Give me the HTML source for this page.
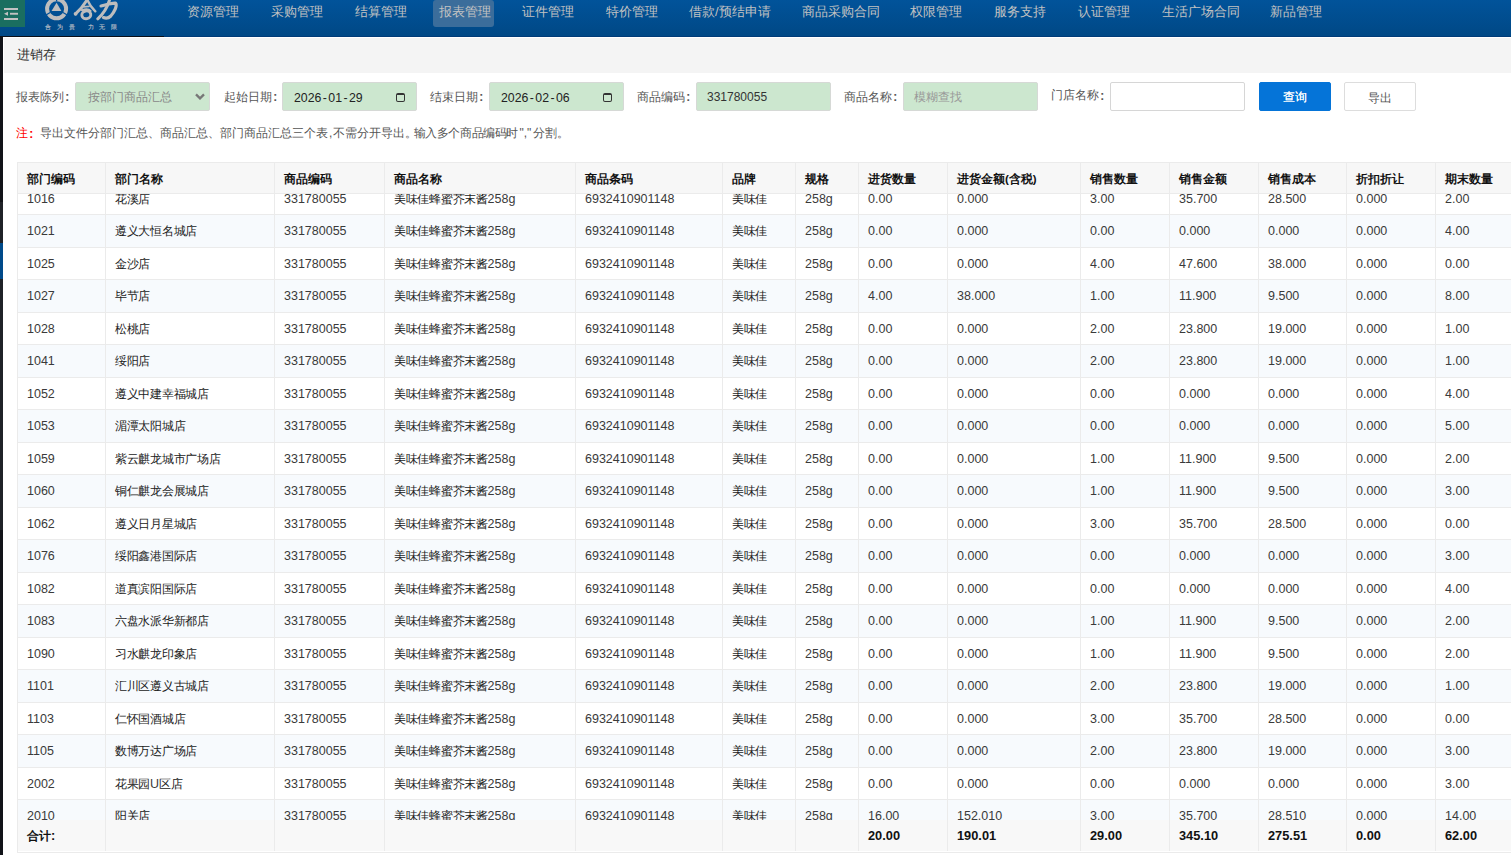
<!DOCTYPE html>
<html><head><meta charset="utf-8">
<style>
*{box-sizing:border-box}
html,body{margin:0;padding:0;width:1511px;height:855px;overflow:hidden;background:#fff;font-family:"Liberation Sans",sans-serif;}
#hdr{position:absolute;left:0;top:0;width:1511px;height:37px;background:linear-gradient(#01539a,#004885);}
#hdr .line{position:absolute;left:0;top:36px;height:1px;width:1511px;background:#003b78}
#hdr .line2{position:absolute;left:0;top:36px;height:1px;width:164px;background:#0b0f18}
#ham{position:absolute;left:0;top:0;width:25px;height:27px;background:#1a6e60}
#logo{position:absolute;left:40px;top:0}
.nav{position:absolute;top:0;height:27px;line-height:24.5px;font-size:13px;color:#c2c2c2;white-space:nowrap}
.nav.act{background:#3b6d9b;border-radius:3px}
#strip{position:absolute;left:0;top:37px;width:3px;height:818px;background:#1f2227}
#strip .a{position:absolute;left:0;top:0;width:3px;height:165px;background:#111318}
#strip .c{position:absolute;left:0;top:493px;width:3px;height:325px;background:#111318}
#strip .b{position:absolute;left:0;top:206px;width:3px;height:36px;background:#004a8a}
#panel{position:absolute;left:3px;top:37px;width:1508px;height:818px;background:#fff}
#title{position:absolute;left:1px;top:1px;width:1507px;height:35px;background:#f4f4f4;font-size:13px;line-height:33px;padding-left:13px;color:#333}
.lbl{position:absolute;top:45.5px;height:28px;line-height:28px;font-size:12px;color:#555;white-space:nowrap}
.inp{position:absolute;top:45.3px;height:28.3px;background:#cce7cf;border:1px solid #d6d9d6;border-radius:2px;font-size:12px;line-height:28px;color:#333;white-space:nowrap}
.cal{position:absolute;top:9.3px;width:9px;height:9.5px;border:1.4px solid #333;border-top-width:2.6px;border-radius:2px}
#note{position:absolute;left:13px;top:87px;height:18px;line-height:18px;font-size:12px;color:#555;white-space:nowrap}
#note b{color:#f00;font-weight:normal}
.dt{font-size:12.3px;color:#222;position:relative;top:1px}.dt i{font-style:normal;margin:0 1.45px}
.cm{display:inline-block;width:5px;font-style:normal;padding-left:1px}.pd{display:inline-block;width:8.5px;font-style:normal;overflow:hidden;vertical-align:top}
.qt{font-style:normal;margin:0 1.5px}
.ls{font-style:normal;letter-spacing:-0.4px}
.co{display:inline-block;width:12px;padding-left:1.2px;font-style:normal;font-weight:bold;position:relative;top:0.5px}
#tbl{position:absolute;left:14px;top:125px;width:1530px;height:691px;border-top:1px solid #ebebeb;border-left:1px solid #ebebeb}
#thead{position:absolute;left:0;top:0;width:100%;height:31px;background:#f7f7f7;border-bottom:1px solid #ebebeb}
#tbody{position:absolute;left:0;top:31px;width:100%;height:626px;overflow:hidden}
#tfoot{position:absolute;left:0;top:657px;width:100%;height:31px;background:#f8f8f8}
#tbot{position:absolute;left:-1px;top:689px;width:100%;height:1px;background:#ebebeb}
.row{position:absolute;left:0;width:100%;height:32.5px;border-top:1px solid #ebebeb}
.vl{position:absolute;top:0;width:1px;height:688px;background:#ebebeb}
.c{position:absolute;white-space:nowrap;font-size:12px;color:#222}
.n{font-size:12.5px;color:#3a3a3a}
.td .k{letter-spacing:-0.3px}
.tf .n{font-size:12.8px;color:#111}
.th{font-weight:bold;color:#111;font-size:11.5px}
.tf{font-weight:bold;color:#111;font-size:12px}
</style></head><body>
<div id="hdr">
  <div id="ham"><svg width="25" height="27" viewBox="0 0 25 27"><g fill="#c2c2c2"><rect x="4" y="8" width="14" height="2"/><rect x="10" y="12.8" width="8" height="1.9"/><rect x="4" y="18" width="14" height="2"/><polygon points="4,13.8 8,11.8 8,15.8"/></g></svg></div>
  <div class="line"></div><div class="line2"></div>
  <svg id="logo" width="80" height="32" viewBox="40 0 80 32">
    <circle cx="56.6" cy="8.8" r="9.5" fill="none" stroke="#bdbdbd" stroke-width="4"/>
    <g stroke="#00529b" stroke-width="1.3">
      <line x1="56.6" y1="1.3" x2="56.6" y2="-4"/>
      <line x1="63" y1="12.5" x2="68.5" y2="15.7"/>
      <line x1="50.2" y1="12.5" x2="44.7" y2="15.7"/>
    </g>
    <polygon points="56.6,2.7 51.5,11.1 61.4,11.1" fill="#bdbdbd"/>
    <g fill="none" stroke="#bdbdbd" stroke-linecap="round">
      <path d="M87 0 C84 5, 80 10, 75.5 13.8" stroke-width="3"/>
      <circle cx="75.6" cy="13.8" r="1.9" fill="#bdbdbd" stroke="none"/>
      <path d="M87.6 0.5 C90 6, 93 9, 95.3 11.3" stroke-width="2.4"/>
      <path d="M83.8 6.8 L89 6.3" stroke-width="1.8"/>
      <path d="M82 10.2 C86 8.8, 89 9.2, 90.5 11" stroke-width="2.2"/>
      <ellipse cx="86.3" cy="14.8" rx="4.5" ry="3.9" stroke-width="2.9" transform="rotate(-12 86.3 14.8)"/>
      <path d="M109.5 0 C107.5 7, 103 14, 97.8 18.8" stroke-width="3"/>
      <path d="M101 6 C106 5, 112 2.6, 115.5 3.2 C117.6 5.5, 114.5 12, 110.8 16 C108.8 18, 106 18.6, 103.5 17.6" stroke-width="3.2"/>
    </g>
    <text x="45" y="29" font-size="5.5" font-weight="bold" fill="#a9b4c2" font-family="Liberation Sans, sans-serif" letter-spacing="5.8">合为贵</text>
    <text x="87.5" y="29" font-size="5.5" font-weight="bold" fill="#a9b4c2" font-family="Liberation Sans, sans-serif" letter-spacing="5.8">力无限</text>
  </svg>
  <div class="nav" style="left:187px">资源管理</div>
  <div class="nav" style="left:271px">采购管理</div>
  <div class="nav" style="left:355px">结算管理</div>
  <div class="nav act" style="left:433px;width:61px;padding-left:6px">报表管理</div>
  <div class="nav" style="left:522px">证件管理</div>
  <div class="nav" style="left:606px">特价管理</div>
  <div class="nav" style="left:689px">借款/预结申请</div>
  <div class="nav" style="left:802px">商品采购合同</div>
  <div class="nav" style="left:910px">权限管理</div>
  <div class="nav" style="left:994px">服务支持</div>
  <div class="nav" style="left:1078px">认证管理</div>
  <div class="nav" style="left:1162px">生活广场合同</div>
  <div class="nav" style="left:1270px">新品管理</div>
</div>
<div id="strip"><div class="a"></div><div class="b"></div><div class="c"></div></div>
<div id="panel">
  <div id="title">进销存</div>
  <div class="lbl" style="left:13px">报表陈列<i class="co">:</i></div>
  <div class="inp" style="left:72px;width:135px;color:#888;padding-left:12px">按部门商品汇总<svg style="position:absolute;left:119px;top:9.5px" width="10" height="7" viewBox="0 0 10 7"><path d="M1 1.4 L5 5.4 L9 1.4" fill="none" stroke="#777" stroke-width="2.3"/></svg></div>
  <div class="lbl" style="left:221px">起始日期<i class="co">:</i></div>
  <div class="inp" style="left:279px;width:135px;padding-left:11px"><span class="dt">2026<i>-</i>01<i>-</i>29</span><div class="cal" style="left:113px"></div></div>
  <div class="lbl" style="left:427px">结束日期<i class="co">:</i></div>
  <div class="inp" style="left:486px;width:135px;padding-left:11px"><span class="dt">2026<i>-</i>02<i>-</i>06</span><div class="cal" style="left:113px"></div></div>
  <div class="lbl" style="left:634px">商品编码<i class="co">:</i></div>
  <div class="inp" style="left:693px;width:135px;padding-left:10px">331780055</div>
  <div class="lbl" style="left:841px">商品名称<i class="co">:</i></div>
  <div class="inp" style="left:900px;width:135px;padding-left:10px;color:#999">模糊查找</div>
  <div class="lbl" style="left:1048px;top:44px">门店名称<i class="co">:</i></div>
  <div class="inp" style="left:1107px;width:135px;background:#fff;border:1px solid #d6d6d6"></div>
  <div class="inp" style="left:1256px;width:72px;background:#0574d8;border-color:#0574d8;color:#fff;text-align:center;font-weight:normal;text-shadow:0 0 0.4px #fff;line-height:29px">查询</div>
  <div class="inp" style="left:1341px;width:72px;background:#fff;border:1px solid #ddd;color:#555;text-align:center;line-height:31.5px">导出</div>
  <div id="note"><b>注<i class="co">:</i></b>导出文件分部门汇总、商品汇总、部门商品汇总三个表<i class="cm">,</i>不需分开导出<i class="pd">。</i><i class="ls">输入多个商品编码时</i><i class="qt">","</i>分割。</div>
  
<div id="tbl">
  <div id="thead"><div class="c th" style="left:9.0px;top:0.70px;height:30px;line-height:30px">部门编码</div><div class="c th" style="left:97.0px;top:0.70px;height:30px;line-height:30px">部门名称</div><div class="c th" style="left:266.0px;top:0.70px;height:30px;line-height:30px">商品编码</div><div class="c th" style="left:376.0px;top:0.70px;height:30px;line-height:30px">商品名称</div><div class="c th" style="left:567.0px;top:0.70px;height:30px;line-height:30px">商品条码</div><div class="c th" style="left:714.0px;top:0.70px;height:30px;line-height:30px">品牌</div><div class="c th" style="left:787.0px;top:0.70px;height:30px;line-height:30px">规格</div><div class="c th" style="left:850.0px;top:0.70px;height:30px;line-height:30px">进货数量</div><div class="c th" style="left:939.0px;top:0.70px;height:30px;line-height:30px">进货金额(含税)</div><div class="c th" style="left:1072.0px;top:0.70px;height:30px;line-height:30px">销售数量</div><div class="c th" style="left:1161.0px;top:0.70px;height:30px;line-height:30px">销售金额</div><div class="c th" style="left:1250.0px;top:0.70px;height:30px;line-height:30px">销售成本</div><div class="c th" style="left:1338.0px;top:0.70px;height:30px;line-height:30px">折扣折让</div><div class="c th" style="left:1427.0px;top:0.70px;height:30px;line-height:30px">期末数量</div></div>
  <div id="tbody"><div class="row" style="top:-12.50px;background:#fff"></div><div class="c td" style="left:9.0px;top:-11.50px;height:32.5px;line-height:32.5px"><span class="n">1016</span></div><div class="c td" style="left:97.0px;top:-11.50px;height:32.5px;line-height:32.5px"><span class="k">花溪店</span></div><div class="c td" style="left:266.0px;top:-11.50px;height:32.5px;line-height:32.5px"><span class="n">331780055</span></div><div class="c td" style="left:376.0px;top:-11.50px;height:32.5px;line-height:32.5px"><span class="k">美味佳蜂蜜芥末酱</span><span class="n">258g</span></div><div class="c td" style="left:567.0px;top:-11.50px;height:32.5px;line-height:32.5px"><span class="n">6932410901148</span></div><div class="c td" style="left:714.0px;top:-11.50px;height:32.5px;line-height:32.5px"><span class="k">美味佳</span></div><div class="c td" style="left:787.0px;top:-11.50px;height:32.5px;line-height:32.5px"><span class="n">258g</span></div><div class="c td" style="left:850.0px;top:-11.50px;height:32.5px;line-height:32.5px"><span class="n">0.00</span></div><div class="c td" style="left:939.0px;top:-11.50px;height:32.5px;line-height:32.5px"><span class="n">0.000</span></div><div class="c td" style="left:1072.0px;top:-11.50px;height:32.5px;line-height:32.5px"><span class="n">3.00</span></div><div class="c td" style="left:1161.0px;top:-11.50px;height:32.5px;line-height:32.5px"><span class="n">35.700</span></div><div class="c td" style="left:1250.0px;top:-11.50px;height:32.5px;line-height:32.5px"><span class="n">28.500</span></div><div class="c td" style="left:1338.0px;top:-11.50px;height:32.5px;line-height:32.5px"><span class="n">0.000</span></div><div class="c td" style="left:1427.0px;top:-11.50px;height:32.5px;line-height:32.5px"><span class="n">2.00</span></div><div class="row" style="top:20.00px;background:#f7fafd"></div><div class="c td" style="left:9.0px;top:21.00px;height:32.5px;line-height:32.5px"><span class="n">1021</span></div><div class="c td" style="left:97.0px;top:21.00px;height:32.5px;line-height:32.5px"><span class="k">遵义大恒名城店</span></div><div class="c td" style="left:266.0px;top:21.00px;height:32.5px;line-height:32.5px"><span class="n">331780055</span></div><div class="c td" style="left:376.0px;top:21.00px;height:32.5px;line-height:32.5px"><span class="k">美味佳蜂蜜芥末酱</span><span class="n">258g</span></div><div class="c td" style="left:567.0px;top:21.00px;height:32.5px;line-height:32.5px"><span class="n">6932410901148</span></div><div class="c td" style="left:714.0px;top:21.00px;height:32.5px;line-height:32.5px"><span class="k">美味佳</span></div><div class="c td" style="left:787.0px;top:21.00px;height:32.5px;line-height:32.5px"><span class="n">258g</span></div><div class="c td" style="left:850.0px;top:21.00px;height:32.5px;line-height:32.5px"><span class="n">0.00</span></div><div class="c td" style="left:939.0px;top:21.00px;height:32.5px;line-height:32.5px"><span class="n">0.000</span></div><div class="c td" style="left:1072.0px;top:21.00px;height:32.5px;line-height:32.5px"><span class="n">0.00</span></div><div class="c td" style="left:1161.0px;top:21.00px;height:32.5px;line-height:32.5px"><span class="n">0.000</span></div><div class="c td" style="left:1250.0px;top:21.00px;height:32.5px;line-height:32.5px"><span class="n">0.000</span></div><div class="c td" style="left:1338.0px;top:21.00px;height:32.5px;line-height:32.5px"><span class="n">0.000</span></div><div class="c td" style="left:1427.0px;top:21.00px;height:32.5px;line-height:32.5px"><span class="n">4.00</span></div><div class="row" style="top:52.50px;background:#fff"></div><div class="c td" style="left:9.0px;top:53.50px;height:32.5px;line-height:32.5px"><span class="n">1025</span></div><div class="c td" style="left:97.0px;top:53.50px;height:32.5px;line-height:32.5px"><span class="k">金沙店</span></div><div class="c td" style="left:266.0px;top:53.50px;height:32.5px;line-height:32.5px"><span class="n">331780055</span></div><div class="c td" style="left:376.0px;top:53.50px;height:32.5px;line-height:32.5px"><span class="k">美味佳蜂蜜芥末酱</span><span class="n">258g</span></div><div class="c td" style="left:567.0px;top:53.50px;height:32.5px;line-height:32.5px"><span class="n">6932410901148</span></div><div class="c td" style="left:714.0px;top:53.50px;height:32.5px;line-height:32.5px"><span class="k">美味佳</span></div><div class="c td" style="left:787.0px;top:53.50px;height:32.5px;line-height:32.5px"><span class="n">258g</span></div><div class="c td" style="left:850.0px;top:53.50px;height:32.5px;line-height:32.5px"><span class="n">0.00</span></div><div class="c td" style="left:939.0px;top:53.50px;height:32.5px;line-height:32.5px"><span class="n">0.000</span></div><div class="c td" style="left:1072.0px;top:53.50px;height:32.5px;line-height:32.5px"><span class="n">4.00</span></div><div class="c td" style="left:1161.0px;top:53.50px;height:32.5px;line-height:32.5px"><span class="n">47.600</span></div><div class="c td" style="left:1250.0px;top:53.50px;height:32.5px;line-height:32.5px"><span class="n">38.000</span></div><div class="c td" style="left:1338.0px;top:53.50px;height:32.5px;line-height:32.5px"><span class="n">0.000</span></div><div class="c td" style="left:1427.0px;top:53.50px;height:32.5px;line-height:32.5px"><span class="n">0.00</span></div><div class="row" style="top:85.00px;background:#f7fafd"></div><div class="c td" style="left:9.0px;top:86.00px;height:32.5px;line-height:32.5px"><span class="n">1027</span></div><div class="c td" style="left:97.0px;top:86.00px;height:32.5px;line-height:32.5px"><span class="k">毕节店</span></div><div class="c td" style="left:266.0px;top:86.00px;height:32.5px;line-height:32.5px"><span class="n">331780055</span></div><div class="c td" style="left:376.0px;top:86.00px;height:32.5px;line-height:32.5px"><span class="k">美味佳蜂蜜芥末酱</span><span class="n">258g</span></div><div class="c td" style="left:567.0px;top:86.00px;height:32.5px;line-height:32.5px"><span class="n">6932410901148</span></div><div class="c td" style="left:714.0px;top:86.00px;height:32.5px;line-height:32.5px"><span class="k">美味佳</span></div><div class="c td" style="left:787.0px;top:86.00px;height:32.5px;line-height:32.5px"><span class="n">258g</span></div><div class="c td" style="left:850.0px;top:86.00px;height:32.5px;line-height:32.5px"><span class="n">4.00</span></div><div class="c td" style="left:939.0px;top:86.00px;height:32.5px;line-height:32.5px"><span class="n">38.000</span></div><div class="c td" style="left:1072.0px;top:86.00px;height:32.5px;line-height:32.5px"><span class="n">1.00</span></div><div class="c td" style="left:1161.0px;top:86.00px;height:32.5px;line-height:32.5px"><span class="n">11.900</span></div><div class="c td" style="left:1250.0px;top:86.00px;height:32.5px;line-height:32.5px"><span class="n">9.500</span></div><div class="c td" style="left:1338.0px;top:86.00px;height:32.5px;line-height:32.5px"><span class="n">0.000</span></div><div class="c td" style="left:1427.0px;top:86.00px;height:32.5px;line-height:32.5px"><span class="n">8.00</span></div><div class="row" style="top:117.50px;background:#fff"></div><div class="c td" style="left:9.0px;top:118.50px;height:32.5px;line-height:32.5px"><span class="n">1028</span></div><div class="c td" style="left:97.0px;top:118.50px;height:32.5px;line-height:32.5px"><span class="k">松桃店</span></div><div class="c td" style="left:266.0px;top:118.50px;height:32.5px;line-height:32.5px"><span class="n">331780055</span></div><div class="c td" style="left:376.0px;top:118.50px;height:32.5px;line-height:32.5px"><span class="k">美味佳蜂蜜芥末酱</span><span class="n">258g</span></div><div class="c td" style="left:567.0px;top:118.50px;height:32.5px;line-height:32.5px"><span class="n">6932410901148</span></div><div class="c td" style="left:714.0px;top:118.50px;height:32.5px;line-height:32.5px"><span class="k">美味佳</span></div><div class="c td" style="left:787.0px;top:118.50px;height:32.5px;line-height:32.5px"><span class="n">258g</span></div><div class="c td" style="left:850.0px;top:118.50px;height:32.5px;line-height:32.5px"><span class="n">0.00</span></div><div class="c td" style="left:939.0px;top:118.50px;height:32.5px;line-height:32.5px"><span class="n">0.000</span></div><div class="c td" style="left:1072.0px;top:118.50px;height:32.5px;line-height:32.5px"><span class="n">2.00</span></div><div class="c td" style="left:1161.0px;top:118.50px;height:32.5px;line-height:32.5px"><span class="n">23.800</span></div><div class="c td" style="left:1250.0px;top:118.50px;height:32.5px;line-height:32.5px"><span class="n">19.000</span></div><div class="c td" style="left:1338.0px;top:118.50px;height:32.5px;line-height:32.5px"><span class="n">0.000</span></div><div class="c td" style="left:1427.0px;top:118.50px;height:32.5px;line-height:32.5px"><span class="n">1.00</span></div><div class="row" style="top:150.00px;background:#f7fafd"></div><div class="c td" style="left:9.0px;top:151.00px;height:32.5px;line-height:32.5px"><span class="n">1041</span></div><div class="c td" style="left:97.0px;top:151.00px;height:32.5px;line-height:32.5px"><span class="k">绥阳店</span></div><div class="c td" style="left:266.0px;top:151.00px;height:32.5px;line-height:32.5px"><span class="n">331780055</span></div><div class="c td" style="left:376.0px;top:151.00px;height:32.5px;line-height:32.5px"><span class="k">美味佳蜂蜜芥末酱</span><span class="n">258g</span></div><div class="c td" style="left:567.0px;top:151.00px;height:32.5px;line-height:32.5px"><span class="n">6932410901148</span></div><div class="c td" style="left:714.0px;top:151.00px;height:32.5px;line-height:32.5px"><span class="k">美味佳</span></div><div class="c td" style="left:787.0px;top:151.00px;height:32.5px;line-height:32.5px"><span class="n">258g</span></div><div class="c td" style="left:850.0px;top:151.00px;height:32.5px;line-height:32.5px"><span class="n">0.00</span></div><div class="c td" style="left:939.0px;top:151.00px;height:32.5px;line-height:32.5px"><span class="n">0.000</span></div><div class="c td" style="left:1072.0px;top:151.00px;height:32.5px;line-height:32.5px"><span class="n">2.00</span></div><div class="c td" style="left:1161.0px;top:151.00px;height:32.5px;line-height:32.5px"><span class="n">23.800</span></div><div class="c td" style="left:1250.0px;top:151.00px;height:32.5px;line-height:32.5px"><span class="n">19.000</span></div><div class="c td" style="left:1338.0px;top:151.00px;height:32.5px;line-height:32.5px"><span class="n">0.000</span></div><div class="c td" style="left:1427.0px;top:151.00px;height:32.5px;line-height:32.5px"><span class="n">1.00</span></div><div class="row" style="top:182.50px;background:#fff"></div><div class="c td" style="left:9.0px;top:183.50px;height:32.5px;line-height:32.5px"><span class="n">1052</span></div><div class="c td" style="left:97.0px;top:183.50px;height:32.5px;line-height:32.5px"><span class="k">遵义中建幸福城店</span></div><div class="c td" style="left:266.0px;top:183.50px;height:32.5px;line-height:32.5px"><span class="n">331780055</span></div><div class="c td" style="left:376.0px;top:183.50px;height:32.5px;line-height:32.5px"><span class="k">美味佳蜂蜜芥末酱</span><span class="n">258g</span></div><div class="c td" style="left:567.0px;top:183.50px;height:32.5px;line-height:32.5px"><span class="n">6932410901148</span></div><div class="c td" style="left:714.0px;top:183.50px;height:32.5px;line-height:32.5px"><span class="k">美味佳</span></div><div class="c td" style="left:787.0px;top:183.50px;height:32.5px;line-height:32.5px"><span class="n">258g</span></div><div class="c td" style="left:850.0px;top:183.50px;height:32.5px;line-height:32.5px"><span class="n">0.00</span></div><div class="c td" style="left:939.0px;top:183.50px;height:32.5px;line-height:32.5px"><span class="n">0.000</span></div><div class="c td" style="left:1072.0px;top:183.50px;height:32.5px;line-height:32.5px"><span class="n">0.00</span></div><div class="c td" style="left:1161.0px;top:183.50px;height:32.5px;line-height:32.5px"><span class="n">0.000</span></div><div class="c td" style="left:1250.0px;top:183.50px;height:32.5px;line-height:32.5px"><span class="n">0.000</span></div><div class="c td" style="left:1338.0px;top:183.50px;height:32.5px;line-height:32.5px"><span class="n">0.000</span></div><div class="c td" style="left:1427.0px;top:183.50px;height:32.5px;line-height:32.5px"><span class="n">4.00</span></div><div class="row" style="top:215.00px;background:#f7fafd"></div><div class="c td" style="left:9.0px;top:216.00px;height:32.5px;line-height:32.5px"><span class="n">1053</span></div><div class="c td" style="left:97.0px;top:216.00px;height:32.5px;line-height:32.5px"><span class="k">湄潭太阳城店</span></div><div class="c td" style="left:266.0px;top:216.00px;height:32.5px;line-height:32.5px"><span class="n">331780055</span></div><div class="c td" style="left:376.0px;top:216.00px;height:32.5px;line-height:32.5px"><span class="k">美味佳蜂蜜芥末酱</span><span class="n">258g</span></div><div class="c td" style="left:567.0px;top:216.00px;height:32.5px;line-height:32.5px"><span class="n">6932410901148</span></div><div class="c td" style="left:714.0px;top:216.00px;height:32.5px;line-height:32.5px"><span class="k">美味佳</span></div><div class="c td" style="left:787.0px;top:216.00px;height:32.5px;line-height:32.5px"><span class="n">258g</span></div><div class="c td" style="left:850.0px;top:216.00px;height:32.5px;line-height:32.5px"><span class="n">0.00</span></div><div class="c td" style="left:939.0px;top:216.00px;height:32.5px;line-height:32.5px"><span class="n">0.000</span></div><div class="c td" style="left:1072.0px;top:216.00px;height:32.5px;line-height:32.5px"><span class="n">0.00</span></div><div class="c td" style="left:1161.0px;top:216.00px;height:32.5px;line-height:32.5px"><span class="n">0.000</span></div><div class="c td" style="left:1250.0px;top:216.00px;height:32.5px;line-height:32.5px"><span class="n">0.000</span></div><div class="c td" style="left:1338.0px;top:216.00px;height:32.5px;line-height:32.5px"><span class="n">0.000</span></div><div class="c td" style="left:1427.0px;top:216.00px;height:32.5px;line-height:32.5px"><span class="n">5.00</span></div><div class="row" style="top:247.50px;background:#fff"></div><div class="c td" style="left:9.0px;top:248.50px;height:32.5px;line-height:32.5px"><span class="n">1059</span></div><div class="c td" style="left:97.0px;top:248.50px;height:32.5px;line-height:32.5px"><span class="k">紫云麒龙城市广场店</span></div><div class="c td" style="left:266.0px;top:248.50px;height:32.5px;line-height:32.5px"><span class="n">331780055</span></div><div class="c td" style="left:376.0px;top:248.50px;height:32.5px;line-height:32.5px"><span class="k">美味佳蜂蜜芥末酱</span><span class="n">258g</span></div><div class="c td" style="left:567.0px;top:248.50px;height:32.5px;line-height:32.5px"><span class="n">6932410901148</span></div><div class="c td" style="left:714.0px;top:248.50px;height:32.5px;line-height:32.5px"><span class="k">美味佳</span></div><div class="c td" style="left:787.0px;top:248.50px;height:32.5px;line-height:32.5px"><span class="n">258g</span></div><div class="c td" style="left:850.0px;top:248.50px;height:32.5px;line-height:32.5px"><span class="n">0.00</span></div><div class="c td" style="left:939.0px;top:248.50px;height:32.5px;line-height:32.5px"><span class="n">0.000</span></div><div class="c td" style="left:1072.0px;top:248.50px;height:32.5px;line-height:32.5px"><span class="n">1.00</span></div><div class="c td" style="left:1161.0px;top:248.50px;height:32.5px;line-height:32.5px"><span class="n">11.900</span></div><div class="c td" style="left:1250.0px;top:248.50px;height:32.5px;line-height:32.5px"><span class="n">9.500</span></div><div class="c td" style="left:1338.0px;top:248.50px;height:32.5px;line-height:32.5px"><span class="n">0.000</span></div><div class="c td" style="left:1427.0px;top:248.50px;height:32.5px;line-height:32.5px"><span class="n">2.00</span></div><div class="row" style="top:280.00px;background:#f7fafd"></div><div class="c td" style="left:9.0px;top:281.00px;height:32.5px;line-height:32.5px"><span class="n">1060</span></div><div class="c td" style="left:97.0px;top:281.00px;height:32.5px;line-height:32.5px"><span class="k">铜仁麒龙会展城店</span></div><div class="c td" style="left:266.0px;top:281.00px;height:32.5px;line-height:32.5px"><span class="n">331780055</span></div><div class="c td" style="left:376.0px;top:281.00px;height:32.5px;line-height:32.5px"><span class="k">美味佳蜂蜜芥末酱</span><span class="n">258g</span></div><div class="c td" style="left:567.0px;top:281.00px;height:32.5px;line-height:32.5px"><span class="n">6932410901148</span></div><div class="c td" style="left:714.0px;top:281.00px;height:32.5px;line-height:32.5px"><span class="k">美味佳</span></div><div class="c td" style="left:787.0px;top:281.00px;height:32.5px;line-height:32.5px"><span class="n">258g</span></div><div class="c td" style="left:850.0px;top:281.00px;height:32.5px;line-height:32.5px"><span class="n">0.00</span></div><div class="c td" style="left:939.0px;top:281.00px;height:32.5px;line-height:32.5px"><span class="n">0.000</span></div><div class="c td" style="left:1072.0px;top:281.00px;height:32.5px;line-height:32.5px"><span class="n">1.00</span></div><div class="c td" style="left:1161.0px;top:281.00px;height:32.5px;line-height:32.5px"><span class="n">11.900</span></div><div class="c td" style="left:1250.0px;top:281.00px;height:32.5px;line-height:32.5px"><span class="n">9.500</span></div><div class="c td" style="left:1338.0px;top:281.00px;height:32.5px;line-height:32.5px"><span class="n">0.000</span></div><div class="c td" style="left:1427.0px;top:281.00px;height:32.5px;line-height:32.5px"><span class="n">3.00</span></div><div class="row" style="top:312.50px;background:#fff"></div><div class="c td" style="left:9.0px;top:313.50px;height:32.5px;line-height:32.5px"><span class="n">1062</span></div><div class="c td" style="left:97.0px;top:313.50px;height:32.5px;line-height:32.5px"><span class="k">遵义日月星城店</span></div><div class="c td" style="left:266.0px;top:313.50px;height:32.5px;line-height:32.5px"><span class="n">331780055</span></div><div class="c td" style="left:376.0px;top:313.50px;height:32.5px;line-height:32.5px"><span class="k">美味佳蜂蜜芥末酱</span><span class="n">258g</span></div><div class="c td" style="left:567.0px;top:313.50px;height:32.5px;line-height:32.5px"><span class="n">6932410901148</span></div><div class="c td" style="left:714.0px;top:313.50px;height:32.5px;line-height:32.5px"><span class="k">美味佳</span></div><div class="c td" style="left:787.0px;top:313.50px;height:32.5px;line-height:32.5px"><span class="n">258g</span></div><div class="c td" style="left:850.0px;top:313.50px;height:32.5px;line-height:32.5px"><span class="n">0.00</span></div><div class="c td" style="left:939.0px;top:313.50px;height:32.5px;line-height:32.5px"><span class="n">0.000</span></div><div class="c td" style="left:1072.0px;top:313.50px;height:32.5px;line-height:32.5px"><span class="n">3.00</span></div><div class="c td" style="left:1161.0px;top:313.50px;height:32.5px;line-height:32.5px"><span class="n">35.700</span></div><div class="c td" style="left:1250.0px;top:313.50px;height:32.5px;line-height:32.5px"><span class="n">28.500</span></div><div class="c td" style="left:1338.0px;top:313.50px;height:32.5px;line-height:32.5px"><span class="n">0.000</span></div><div class="c td" style="left:1427.0px;top:313.50px;height:32.5px;line-height:32.5px"><span class="n">0.00</span></div><div class="row" style="top:345.00px;background:#f7fafd"></div><div class="c td" style="left:9.0px;top:346.00px;height:32.5px;line-height:32.5px"><span class="n">1076</span></div><div class="c td" style="left:97.0px;top:346.00px;height:32.5px;line-height:32.5px"><span class="k">绥阳鑫港国际店</span></div><div class="c td" style="left:266.0px;top:346.00px;height:32.5px;line-height:32.5px"><span class="n">331780055</span></div><div class="c td" style="left:376.0px;top:346.00px;height:32.5px;line-height:32.5px"><span class="k">美味佳蜂蜜芥末酱</span><span class="n">258g</span></div><div class="c td" style="left:567.0px;top:346.00px;height:32.5px;line-height:32.5px"><span class="n">6932410901148</span></div><div class="c td" style="left:714.0px;top:346.00px;height:32.5px;line-height:32.5px"><span class="k">美味佳</span></div><div class="c td" style="left:787.0px;top:346.00px;height:32.5px;line-height:32.5px"><span class="n">258g</span></div><div class="c td" style="left:850.0px;top:346.00px;height:32.5px;line-height:32.5px"><span class="n">0.00</span></div><div class="c td" style="left:939.0px;top:346.00px;height:32.5px;line-height:32.5px"><span class="n">0.000</span></div><div class="c td" style="left:1072.0px;top:346.00px;height:32.5px;line-height:32.5px"><span class="n">0.00</span></div><div class="c td" style="left:1161.0px;top:346.00px;height:32.5px;line-height:32.5px"><span class="n">0.000</span></div><div class="c td" style="left:1250.0px;top:346.00px;height:32.5px;line-height:32.5px"><span class="n">0.000</span></div><div class="c td" style="left:1338.0px;top:346.00px;height:32.5px;line-height:32.5px"><span class="n">0.000</span></div><div class="c td" style="left:1427.0px;top:346.00px;height:32.5px;line-height:32.5px"><span class="n">3.00</span></div><div class="row" style="top:377.50px;background:#fff"></div><div class="c td" style="left:9.0px;top:378.50px;height:32.5px;line-height:32.5px"><span class="n">1082</span></div><div class="c td" style="left:97.0px;top:378.50px;height:32.5px;line-height:32.5px"><span class="k">道真滨阳国际店</span></div><div class="c td" style="left:266.0px;top:378.50px;height:32.5px;line-height:32.5px"><span class="n">331780055</span></div><div class="c td" style="left:376.0px;top:378.50px;height:32.5px;line-height:32.5px"><span class="k">美味佳蜂蜜芥末酱</span><span class="n">258g</span></div><div class="c td" style="left:567.0px;top:378.50px;height:32.5px;line-height:32.5px"><span class="n">6932410901148</span></div><div class="c td" style="left:714.0px;top:378.50px;height:32.5px;line-height:32.5px"><span class="k">美味佳</span></div><div class="c td" style="left:787.0px;top:378.50px;height:32.5px;line-height:32.5px"><span class="n">258g</span></div><div class="c td" style="left:850.0px;top:378.50px;height:32.5px;line-height:32.5px"><span class="n">0.00</span></div><div class="c td" style="left:939.0px;top:378.50px;height:32.5px;line-height:32.5px"><span class="n">0.000</span></div><div class="c td" style="left:1072.0px;top:378.50px;height:32.5px;line-height:32.5px"><span class="n">0.00</span></div><div class="c td" style="left:1161.0px;top:378.50px;height:32.5px;line-height:32.5px"><span class="n">0.000</span></div><div class="c td" style="left:1250.0px;top:378.50px;height:32.5px;line-height:32.5px"><span class="n">0.000</span></div><div class="c td" style="left:1338.0px;top:378.50px;height:32.5px;line-height:32.5px"><span class="n">0.000</span></div><div class="c td" style="left:1427.0px;top:378.50px;height:32.5px;line-height:32.5px"><span class="n">4.00</span></div><div class="row" style="top:410.00px;background:#f7fafd"></div><div class="c td" style="left:9.0px;top:411.00px;height:32.5px;line-height:32.5px"><span class="n">1083</span></div><div class="c td" style="left:97.0px;top:411.00px;height:32.5px;line-height:32.5px"><span class="k">六盘水派华新都店</span></div><div class="c td" style="left:266.0px;top:411.00px;height:32.5px;line-height:32.5px"><span class="n">331780055</span></div><div class="c td" style="left:376.0px;top:411.00px;height:32.5px;line-height:32.5px"><span class="k">美味佳蜂蜜芥末酱</span><span class="n">258g</span></div><div class="c td" style="left:567.0px;top:411.00px;height:32.5px;line-height:32.5px"><span class="n">6932410901148</span></div><div class="c td" style="left:714.0px;top:411.00px;height:32.5px;line-height:32.5px"><span class="k">美味佳</span></div><div class="c td" style="left:787.0px;top:411.00px;height:32.5px;line-height:32.5px"><span class="n">258g</span></div><div class="c td" style="left:850.0px;top:411.00px;height:32.5px;line-height:32.5px"><span class="n">0.00</span></div><div class="c td" style="left:939.0px;top:411.00px;height:32.5px;line-height:32.5px"><span class="n">0.000</span></div><div class="c td" style="left:1072.0px;top:411.00px;height:32.5px;line-height:32.5px"><span class="n">1.00</span></div><div class="c td" style="left:1161.0px;top:411.00px;height:32.5px;line-height:32.5px"><span class="n">11.900</span></div><div class="c td" style="left:1250.0px;top:411.00px;height:32.5px;line-height:32.5px"><span class="n">9.500</span></div><div class="c td" style="left:1338.0px;top:411.00px;height:32.5px;line-height:32.5px"><span class="n">0.000</span></div><div class="c td" style="left:1427.0px;top:411.00px;height:32.5px;line-height:32.5px"><span class="n">2.00</span></div><div class="row" style="top:442.50px;background:#fff"></div><div class="c td" style="left:9.0px;top:443.50px;height:32.5px;line-height:32.5px"><span class="n">1090</span></div><div class="c td" style="left:97.0px;top:443.50px;height:32.5px;line-height:32.5px"><span class="k">习水麒龙印象店</span></div><div class="c td" style="left:266.0px;top:443.50px;height:32.5px;line-height:32.5px"><span class="n">331780055</span></div><div class="c td" style="left:376.0px;top:443.50px;height:32.5px;line-height:32.5px"><span class="k">美味佳蜂蜜芥末酱</span><span class="n">258g</span></div><div class="c td" style="left:567.0px;top:443.50px;height:32.5px;line-height:32.5px"><span class="n">6932410901148</span></div><div class="c td" style="left:714.0px;top:443.50px;height:32.5px;line-height:32.5px"><span class="k">美味佳</span></div><div class="c td" style="left:787.0px;top:443.50px;height:32.5px;line-height:32.5px"><span class="n">258g</span></div><div class="c td" style="left:850.0px;top:443.50px;height:32.5px;line-height:32.5px"><span class="n">0.00</span></div><div class="c td" style="left:939.0px;top:443.50px;height:32.5px;line-height:32.5px"><span class="n">0.000</span></div><div class="c td" style="left:1072.0px;top:443.50px;height:32.5px;line-height:32.5px"><span class="n">1.00</span></div><div class="c td" style="left:1161.0px;top:443.50px;height:32.5px;line-height:32.5px"><span class="n">11.900</span></div><div class="c td" style="left:1250.0px;top:443.50px;height:32.5px;line-height:32.5px"><span class="n">9.500</span></div><div class="c td" style="left:1338.0px;top:443.50px;height:32.5px;line-height:32.5px"><span class="n">0.000</span></div><div class="c td" style="left:1427.0px;top:443.50px;height:32.5px;line-height:32.5px"><span class="n">2.00</span></div><div class="row" style="top:475.00px;background:#f7fafd"></div><div class="c td" style="left:9.0px;top:476.00px;height:32.5px;line-height:32.5px"><span class="n">1101</span></div><div class="c td" style="left:97.0px;top:476.00px;height:32.5px;line-height:32.5px"><span class="k">汇川区遵义古城店</span></div><div class="c td" style="left:266.0px;top:476.00px;height:32.5px;line-height:32.5px"><span class="n">331780055</span></div><div class="c td" style="left:376.0px;top:476.00px;height:32.5px;line-height:32.5px"><span class="k">美味佳蜂蜜芥末酱</span><span class="n">258g</span></div><div class="c td" style="left:567.0px;top:476.00px;height:32.5px;line-height:32.5px"><span class="n">6932410901148</span></div><div class="c td" style="left:714.0px;top:476.00px;height:32.5px;line-height:32.5px"><span class="k">美味佳</span></div><div class="c td" style="left:787.0px;top:476.00px;height:32.5px;line-height:32.5px"><span class="n">258g</span></div><div class="c td" style="left:850.0px;top:476.00px;height:32.5px;line-height:32.5px"><span class="n">0.00</span></div><div class="c td" style="left:939.0px;top:476.00px;height:32.5px;line-height:32.5px"><span class="n">0.000</span></div><div class="c td" style="left:1072.0px;top:476.00px;height:32.5px;line-height:32.5px"><span class="n">2.00</span></div><div class="c td" style="left:1161.0px;top:476.00px;height:32.5px;line-height:32.5px"><span class="n">23.800</span></div><div class="c td" style="left:1250.0px;top:476.00px;height:32.5px;line-height:32.5px"><span class="n">19.000</span></div><div class="c td" style="left:1338.0px;top:476.00px;height:32.5px;line-height:32.5px"><span class="n">0.000</span></div><div class="c td" style="left:1427.0px;top:476.00px;height:32.5px;line-height:32.5px"><span class="n">1.00</span></div><div class="row" style="top:507.50px;background:#fff"></div><div class="c td" style="left:9.0px;top:508.50px;height:32.5px;line-height:32.5px"><span class="n">1103</span></div><div class="c td" style="left:97.0px;top:508.50px;height:32.5px;line-height:32.5px"><span class="k">仁怀国酒城店</span></div><div class="c td" style="left:266.0px;top:508.50px;height:32.5px;line-height:32.5px"><span class="n">331780055</span></div><div class="c td" style="left:376.0px;top:508.50px;height:32.5px;line-height:32.5px"><span class="k">美味佳蜂蜜芥末酱</span><span class="n">258g</span></div><div class="c td" style="left:567.0px;top:508.50px;height:32.5px;line-height:32.5px"><span class="n">6932410901148</span></div><div class="c td" style="left:714.0px;top:508.50px;height:32.5px;line-height:32.5px"><span class="k">美味佳</span></div><div class="c td" style="left:787.0px;top:508.50px;height:32.5px;line-height:32.5px"><span class="n">258g</span></div><div class="c td" style="left:850.0px;top:508.50px;height:32.5px;line-height:32.5px"><span class="n">0.00</span></div><div class="c td" style="left:939.0px;top:508.50px;height:32.5px;line-height:32.5px"><span class="n">0.000</span></div><div class="c td" style="left:1072.0px;top:508.50px;height:32.5px;line-height:32.5px"><span class="n">3.00</span></div><div class="c td" style="left:1161.0px;top:508.50px;height:32.5px;line-height:32.5px"><span class="n">35.700</span></div><div class="c td" style="left:1250.0px;top:508.50px;height:32.5px;line-height:32.5px"><span class="n">28.500</span></div><div class="c td" style="left:1338.0px;top:508.50px;height:32.5px;line-height:32.5px"><span class="n">0.000</span></div><div class="c td" style="left:1427.0px;top:508.50px;height:32.5px;line-height:32.5px"><span class="n">0.00</span></div><div class="row" style="top:540.00px;background:#f7fafd"></div><div class="c td" style="left:9.0px;top:541.00px;height:32.5px;line-height:32.5px"><span class="n">1105</span></div><div class="c td" style="left:97.0px;top:541.00px;height:32.5px;line-height:32.5px"><span class="k">数博万达广场店</span></div><div class="c td" style="left:266.0px;top:541.00px;height:32.5px;line-height:32.5px"><span class="n">331780055</span></div><div class="c td" style="left:376.0px;top:541.00px;height:32.5px;line-height:32.5px"><span class="k">美味佳蜂蜜芥末酱</span><span class="n">258g</span></div><div class="c td" style="left:567.0px;top:541.00px;height:32.5px;line-height:32.5px"><span class="n">6932410901148</span></div><div class="c td" style="left:714.0px;top:541.00px;height:32.5px;line-height:32.5px"><span class="k">美味佳</span></div><div class="c td" style="left:787.0px;top:541.00px;height:32.5px;line-height:32.5px"><span class="n">258g</span></div><div class="c td" style="left:850.0px;top:541.00px;height:32.5px;line-height:32.5px"><span class="n">0.00</span></div><div class="c td" style="left:939.0px;top:541.00px;height:32.5px;line-height:32.5px"><span class="n">0.000</span></div><div class="c td" style="left:1072.0px;top:541.00px;height:32.5px;line-height:32.5px"><span class="n">2.00</span></div><div class="c td" style="left:1161.0px;top:541.00px;height:32.5px;line-height:32.5px"><span class="n">23.800</span></div><div class="c td" style="left:1250.0px;top:541.00px;height:32.5px;line-height:32.5px"><span class="n">19.000</span></div><div class="c td" style="left:1338.0px;top:541.00px;height:32.5px;line-height:32.5px"><span class="n">0.000</span></div><div class="c td" style="left:1427.0px;top:541.00px;height:32.5px;line-height:32.5px"><span class="n">3.00</span></div><div class="row" style="top:572.50px;background:#fff"></div><div class="c td" style="left:9.0px;top:573.50px;height:32.5px;line-height:32.5px"><span class="n">2002</span></div><div class="c td" style="left:97.0px;top:573.50px;height:32.5px;line-height:32.5px"><span class="k">花果园</span><span class="n">U</span><span class="k">区店</span></div><div class="c td" style="left:266.0px;top:573.50px;height:32.5px;line-height:32.5px"><span class="n">331780055</span></div><div class="c td" style="left:376.0px;top:573.50px;height:32.5px;line-height:32.5px"><span class="k">美味佳蜂蜜芥末酱</span><span class="n">258g</span></div><div class="c td" style="left:567.0px;top:573.50px;height:32.5px;line-height:32.5px"><span class="n">6932410901148</span></div><div class="c td" style="left:714.0px;top:573.50px;height:32.5px;line-height:32.5px"><span class="k">美味佳</span></div><div class="c td" style="left:787.0px;top:573.50px;height:32.5px;line-height:32.5px"><span class="n">258g</span></div><div class="c td" style="left:850.0px;top:573.50px;height:32.5px;line-height:32.5px"><span class="n">0.00</span></div><div class="c td" style="left:939.0px;top:573.50px;height:32.5px;line-height:32.5px"><span class="n">0.000</span></div><div class="c td" style="left:1072.0px;top:573.50px;height:32.5px;line-height:32.5px"><span class="n">0.00</span></div><div class="c td" style="left:1161.0px;top:573.50px;height:32.5px;line-height:32.5px"><span class="n">0.000</span></div><div class="c td" style="left:1250.0px;top:573.50px;height:32.5px;line-height:32.5px"><span class="n">0.000</span></div><div class="c td" style="left:1338.0px;top:573.50px;height:32.5px;line-height:32.5px"><span class="n">0.000</span></div><div class="c td" style="left:1427.0px;top:573.50px;height:32.5px;line-height:32.5px"><span class="n">3.00</span></div><div class="row" style="top:605.00px;background:#f7fafd"></div><div class="c td" style="left:9.0px;top:606.00px;height:32.5px;line-height:32.5px"><span class="n">2010</span></div><div class="c td" style="left:97.0px;top:606.00px;height:32.5px;line-height:32.5px"><span class="k">阳关店</span></div><div class="c td" style="left:266.0px;top:606.00px;height:32.5px;line-height:32.5px"><span class="n">331780055</span></div><div class="c td" style="left:376.0px;top:606.00px;height:32.5px;line-height:32.5px"><span class="k">美味佳蜂蜜芥末酱</span><span class="n">258g</span></div><div class="c td" style="left:567.0px;top:606.00px;height:32.5px;line-height:32.5px"><span class="n">6932410901148</span></div><div class="c td" style="left:714.0px;top:606.00px;height:32.5px;line-height:32.5px"><span class="k">美味佳</span></div><div class="c td" style="left:787.0px;top:606.00px;height:32.5px;line-height:32.5px"><span class="n">258g</span></div><div class="c td" style="left:850.0px;top:606.00px;height:32.5px;line-height:32.5px"><span class="n">16.00</span></div><div class="c td" style="left:939.0px;top:606.00px;height:32.5px;line-height:32.5px"><span class="n">152.010</span></div><div class="c td" style="left:1072.0px;top:606.00px;height:32.5px;line-height:32.5px"><span class="n">3.00</span></div><div class="c td" style="left:1161.0px;top:606.00px;height:32.5px;line-height:32.5px"><span class="n">35.700</span></div><div class="c td" style="left:1250.0px;top:606.00px;height:32.5px;line-height:32.5px"><span class="n">28.510</span></div><div class="c td" style="left:1338.0px;top:606.00px;height:32.5px;line-height:32.5px"><span class="n">0.000</span></div><div class="c td" style="left:1427.0px;top:606.00px;height:32.5px;line-height:32.5px"><span class="n">14.00</span></div></div>
  <div id="tfoot"><div class="c tf" style="left:9.0px;top:0.30px;height:31px;line-height:31px"><span class="k">合计</span><span class="n">:</span></div><div class="c tf" style="left:850.0px;top:0.30px;height:31px;line-height:31px"><span class="n">20.00</span></div><div class="c tf" style="left:939.0px;top:0.30px;height:31px;line-height:31px"><span class="n">190.01</span></div><div class="c tf" style="left:1072.0px;top:0.30px;height:31px;line-height:31px"><span class="n">29.00</span></div><div class="c tf" style="left:1161.0px;top:0.30px;height:31px;line-height:31px"><span class="n">345.10</span></div><div class="c tf" style="left:1250.0px;top:0.30px;height:31px;line-height:31px"><span class="n">275.51</span></div><div class="c tf" style="left:1338.0px;top:0.30px;height:31px;line-height:31px"><span class="n">0.00</span></div><div class="c tf" style="left:1427.0px;top:0.30px;height:31px;line-height:31px"><span class="n">62.00</span></div></div>
  <div id="tbot"></div>
  <div class="vl" style="left:87px"></div><div class="vl" style="left:256px"></div><div class="vl" style="left:366px"></div><div class="vl" style="left:557px"></div><div class="vl" style="left:704px"></div><div class="vl" style="left:777px"></div><div class="vl" style="left:840px"></div><div class="vl" style="left:929px"></div><div class="vl" style="left:1062px"></div><div class="vl" style="left:1151px"></div><div class="vl" style="left:1240px"></div><div class="vl" style="left:1328px"></div><div class="vl" style="left:1417px"></div>
</div>

</div>
</body></html>
